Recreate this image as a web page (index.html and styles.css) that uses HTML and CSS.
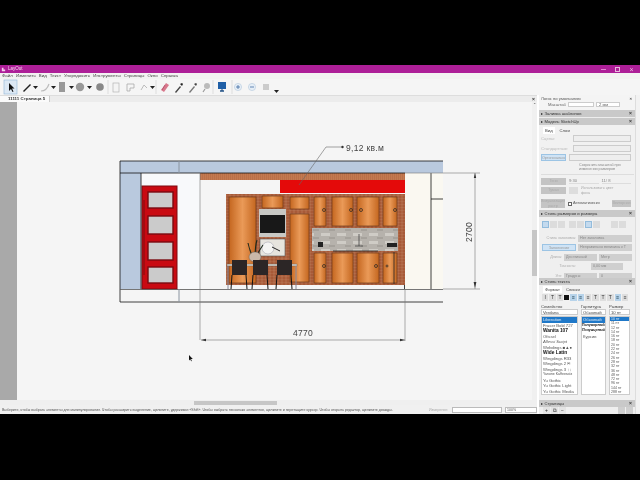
FILE: index.html
```html
<!DOCTYPE html>
<html lang="ru">
<head>
<meta charset="utf-8">
<title>LayOut</title>
<link rel="stylesheet" href="styles.css">
</head>
<body>
<div class="letterbox-top"></div>
<div class="app">
  <header class="titlebar">
    <svg class="logo" viewBox="0 0 6 6"><path d="M1 5V1h2v2h2v2z" fill="#f6d0ee"/></svg>
    <span class="title">LayOut</span>
    <span class="winbtns"><i class="wb wb-min"></i><i class="wb wb-max"></i><i class="wb wb-x">×</i></span>
  </header>
  <nav class="menubar">
    <span>Файл</span><span>Изменить</span><span>Вид</span><span>Текст</span><span>Упорядочить</span><span>Инструменты</span><span>Страницы</span><span>Окно</span><span>Справка</span>
  </nav>
  <div class="toolbar">
    <svg class="tools" viewBox="0 0 290 16" width="290" height="16">
      <rect x="4" y="1" width="13" height="14" fill="#dce8f4" stroke="#8fb4d8" stroke-width=".6"/>
      <path d="M9 4v8l2-2 1.500 3 1-.5-1.500-3h2.500z" fill="#111"/>
      <path d="M23 12l7-7 1 1-7 7z" fill="#222"/><path d="M33 7h5l-2.500 3z" fill="#222"/>
      <path d="M41 12c3 0 6-1 8-7" fill="none" stroke="#bbb" stroke-width="1.200"/><path d="M51 7h5l-2.500 3z" fill="#222"/>
      <rect x="59" y="3" width="6" height="10" fill="#999"/><path d="M69 7h5l-2.500 3z" fill="#222"/>
      <circle cx="80" cy="8" r="4.200" fill="#999"/><path d="M87 7h5l-2.500 3z" fill="#222"/>
      <circle cx="100" cy="8" r="3.800" fill="#888"/>
      <path d="M108 1v14M156 1v14M213 1v14M232 1v14" stroke="#ccc" stroke-width=".6"/>
      <rect x="113" y="4" width="6" height="9" fill="#f4f4f4" stroke="#aaa" stroke-width=".6"/>
      <path d="M127 12V5h7v4h-4v3z" fill="none" stroke="#aaa" stroke-width=".8"/>
      <path d="M141 11l3-5 3 3" fill="none" stroke="#bbb" stroke-width="1"/><path d="M150 7h5l-2.500 3z" fill="#222"/>
      <path d="M161 11l5-7 3 2-5 7z" fill="#d8788c"/><path d="M162 11l3-5" stroke="#a04060" stroke-width=".6"/>
      <path d="M175 13l5-6 1 1-5 6z" fill="#444"/><path d="M180 5l2-1 1 1-1 2z" fill="#222"/>
      <path d="M189 13l5-6 1 1-5 6z" fill="#777"/><path d="M194 5l2-1 1 1-1 2z" fill="#444"/>
      <circle cx="207" cy="7" r="3" fill="#bbb"/><path d="M205 10l-2 3" stroke="#999" stroke-width="1.200"/>
      <rect x="218" y="3" width="8" height="7" fill="#1f5fa6"/><path d="M220 12h4" stroke="#14477f" stroke-width="1.400"/><path d="M222 10v2" stroke="#14477f"/>
      <circle cx="238" cy="8" r="3.600" fill="#e6eef6" stroke="#a8c0d8" stroke-width=".5"/><path d="M236 8h4M238 6v4" stroke="#2a5a9a" stroke-width=".7"/>
      <circle cx="252" cy="8" r="3.600" fill="#e6eef6" stroke="#a8c0d8" stroke-width=".5"/><path d="M250 8h4" stroke="#2a5a9a" stroke-width=".7"/>
      <rect x="263" y="5" width="6" height="6" fill="#ccc"/>
      <path d="M274 11h5l-2.500 3z" fill="#222"/>
    </svg>
  </div>
  <div class="workspace">
    <div class="docarea">
      <div class="tabrow"><span class="tab">11111 Страница 5</span><b class="tabx">×</b></div>
      <div class="docrow">
        <div class="gutter"></div>
        <div class="canvas">
          <svg class="drawing" viewBox="17 102 515 298" width="515" height="298">
            <defs>
              <linearGradient id="wood" x1="0" x2="1" y1="0" y2="0">
                <stop offset="0" stop-color="#c4661f"/><stop offset=".5" stop-color="#ea9a58"/><stop offset="1" stop-color="#c4661f"/>
              </linearGradient>
              <pattern id="brick" width="4" height="3" patternUnits="userSpaceOnUse">
                <rect width="4" height="3" fill="#a85a38"/><path d="M0 0h4M2 0v3" stroke="#c89070" stroke-width=".4"/>
              </pattern>
              <pattern id="strip" width="2" height="7" patternUnits="userSpaceOnUse">
                <rect width="2" height="7" fill="#c47a50"/><path d="M0 0v7" stroke="#a0583a" stroke-width=".6"/>
              </pattern>
              <pattern id="tile" width="16" height="8" patternUnits="userSpaceOnUse">
                <rect width="16" height="8" fill="#b6b2ac"/><rect x="1" y="1" width="9" height="3" fill="#cfccc6"/><rect x="9" y="5" width="6" height="2" fill="#a6a29c"/>
              </pattern>
            </defs>
            <rect x="120" y="161" width="323" height="12" fill="#b9c9de"/>
            <rect x="120" y="173" width="21" height="116" fill="#b9c9de"/>
            <rect x="142" y="173" width="58" height="116" fill="#f8f9fb"/>
            <rect x="405" y="173" width="38" height="116" fill="#faf8f1"/>
            <rect x="200" y="173" width="205" height="7" fill="url(#strip)"/>
            <rect x="280" y="180" width="125" height="13" fill="#e40a0a"/>
            <rect x="226" y="194" width="179" height="91" fill="url(#brick)"/>

            <g fill="url(#wood)" stroke="#6e3a1c" stroke-width=".7">
              <rect x="229" y="197" width="27" height="86"/>
              <rect x="262" y="196" width="21" height="12"/>
              <rect x="290" y="197" width="19" height="12"/>
              <rect x="290" y="214" width="19" height="68"/>
              <rect x="314" y="197" width="12" height="29"/>
              <rect x="332" y="197" width="21" height="29"/>
              <rect x="357" y="197" width="22" height="29"/>
              <rect x="383" y="197" width="14" height="29"/>
              <rect x="314" y="253" width="12" height="30"/>
              <rect x="332" y="253" width="21" height="30"/>
              <rect x="357" y="253" width="22" height="30"/>
              <rect x="383" y="253" width="14" height="30"/>
            </g>
            <rect x="312" y="228" width="86" height="23" fill="url(#tile)"/>
            <path d="M333 251h45" stroke="#222" stroke-width=".8"/>
            <path d="M359 234v12M355 246h8" stroke="#444" stroke-width=".8" fill="none"/>
            <rect x="318" y="242" width="5" height="5" fill="#222"/>
            <rect x="387" y="243" width="10" height="4" fill="#222"/>
            <g fill="none" stroke="#222" stroke-width=".7">
              <circle cx="324" cy="210" r="1.500"/><circle cx="351" cy="210" r="1.500"/><circle cx="361" cy="210" r="1.500"/><circle cx="395" cy="210" r="1.500"/>
              <circle cx="324" cy="266" r="1.500"/><circle cx="376" cy="266" r="1.500"/><circle cx="387" cy="266" r="1"/>
            </g>
            <path d="M394 252v32" stroke="#222" stroke-width=".8"/>

            <rect x="259" y="209" width="27" height="28" fill="#c8c8c4"/>
            <rect x="260" y="215" width="25" height="18" fill="#181818"/>
            <rect x="260" y="239" width="25" height="17" fill="#e6e4de" stroke="#555" stroke-width=".6"/>
            <circle cx="268" cy="248" r="6" fill="#f4f4f2" stroke="#889" stroke-width=".4"/>
            <path d="M272 247l8 4" stroke="#222" stroke-width="1"/>
            <path d="M255 260c-3-4-6-12-7-17M255 260c0-6 0-14 2-20M255 260c2-6 5-11 8-15M255 260c-3-3-4-6-5-10" stroke="#1f2a1c" stroke-width="1.100" fill="none"/>
            <ellipse cx="255" cy="257" rx="6" ry="5" fill="#c9b8a8" stroke="#555" stroke-width=".4"/>
            <rect x="227" y="264" width="70" height="2" fill="#cfcac2" stroke="#555" stroke-width=".3"/>
            <path d="M228 266v23M296 266v23" stroke="#889" stroke-width="1"/>
            <g fill="#2c2626">
              <rect x="232" y="260" width="15" height="15"/>
              <rect x="253" y="260" width="15" height="15"/>
              <rect x="277" y="260" width="15" height="15"/>
            </g>
            <path d="M232 275l-1 14M246 275l1 14M253 275l-1 14M267 275l1 14M277 275l-1 14M291 275l1 14" stroke="#111" stroke-width="1"/>

            <rect x="142" y="186" width="35" height="103" fill="#c90a12" stroke="#7c0a10" stroke-width="1"/>
            <g fill="#cbcbcb" stroke="#7a0a10" stroke-width="1.400">
              <rect x="148" y="192" width="25" height="16"/>
              <rect x="148" y="216" width="25" height="18"/>
              <rect x="148" y="242" width="25" height="18"/>
              <rect x="148" y="267" width="25" height="16"/>
            </g>
            <path d="M144 200v75" stroke="#6e0a10" stroke-width=".8"/>

            <path d="M120 161h323M120 173h285M120 161v141h323M141 173v116M431 173v116M431 199h12M404.500 285v4" fill="none" stroke="#111" stroke-width=".8"/>
            <path d="M120 289.500h323" stroke="#555" stroke-width=".8"/>
            <path d="M179 161v12M179 289v13" stroke="#8a94a0" stroke-width="1"/>
            <path d="M200 173v167M405 289v52M405 173h75M443 289h37M475 173v116M201 340h204" fill="none" stroke="#777" stroke-width=".6"/>
            <path d="M475 173l-1.200 5h2.400zM475 288l-1.400-6h2.800zM201 340l5-1.200v2.400zM405 340l-5-1.200v2.400z" fill="#333"/>
            <path d="M299 185l27-38h16" fill="none" stroke="#666" stroke-width=".6"/>
            <circle cx="342.500" cy="147" r="1.200" fill="#333"/>
            <text class="dim" x="346" y="150.500">9,12 кв.м</text>
            <text class="dim" x="293" y="336">4770</text>
            <text class="dim" transform="translate(472 242) rotate(-90)">2700</text>
            <path d="M189 355v5.500l1.300-1.200.8 1.900.7-.3-.8-1.900h1.800z" fill="#111"/>
          </svg>
        </div>
        <div class="vscroll"><b class="arrow">⌃</b><div class="vthumb"></div></div>
      </div>
      <div class="hscroll"><div class="hthumb"></div></div>
      <footer class="status">
        <span class="hint">Выберите, чтобы выбрать элементы для манипулирования. Чтобы расширить выделение, щелкните, удерживая «Shift». Чтобы выбрать несколько элементов, щелкните и перетащите курсор. Чтобы открыть редактор, щелкните дважды.</span>
        <span class="sl">Измерения</span><i class="sbox"></i><i class="sbox zoom">100%</i>
      </footer>
    </div>
    <aside class="panel">
      <div class="pcontent">
      <div class="p-top">
        <div class="p-title"><span>Логос по умолчанию</span><b>×</b></div>
        <div class="p-scale"><span>Масштаб</span><i class="field f28"></i><i class="field f22">2 мм</i></div>
      </div>
      <div class="acc"><span>Заливка шаблонов</span><b>×</b></div>
      <div class="acc"><span>Модель SketchUp</span><b>×</b></div>
      <section class="model">
        <div class="tabs"><span class="on">Вид</span><span>Слои</span></div>
        <div class="mrow"><span class="lbl">Сцены:</span><i class="field fgrow"></i></div>
        <div class="mrow"><span class="lbl">Стандартные:</span><i class="field fgrow"></i></div>
        <div class="mrow"><span class="blue-btn">Ортогонально</span><i class="field fgrow"></i></div>
        <div class="note">Сохранить масштаб при<br>изменении размеров</div>
        <div class="divider"></div>
        <div class="mrow"><span class="gray-btn">Тени</span><span class="num">9:30</span><span class="num">11/ 8</span></div>
        <div class="mrow"><span class="gray-btn">Туман</span><span class="sw"></span><span class="note2">Использовать цвет<br>фона</span></div>
        <div class="mrow mrow-last"><span class="gray-btn small">Визуализация<br>растр</span><span class="check"></span><span class="auto">Автоматически</span><span class="gray-btn end">Векторная</span></div>
      </section>
      <div class="acc"><span>Стиль размеров и размера</span><b>×</b></div>
      <section class="dims">
        <div class="icons">
          <i class="ic sel"></i><i class="ic"></i><i class="ic"></i><i class="ic gap"></i><i class="ic"></i><i class="ic sel"></i><i class="ic"></i><i class="ic gap2"></i><i class="ic"></i>
        </div>
        <div class="drow"><span class="dl">Стиль заголовка:</span><span class="dv">Нет заголовка</span></div>
        <div class="drow"><span class="blue-btn wide">Заполнение</span><span class="dv">Неправильно величина к Т</span></div>
        <div class="drow"><span class="dl short">Длина:</span><span class="dv half">Десятичный</span><span class="dv half">Метр</span></div>
        <div class="drow"><span class="dl">Точность:</span><span class="dv small">0,00 мм</span></div>
        <div class="drow"><span class="dl short">Угл:</span><span class="dv half">Градусы</span><span class="dv half">0</span></div>
      </section>
      <div class="acc"><span>Стиль текста</span><b>×</b></div>
      <section class="textstyle">
        <div class="tabs tight"><span class="on">Формат</span><span>Списки</span></div>
        <div class="ticons">
          <i class="t">I</i><i class="t">T</i><i class="t">T</i><i class="t black"></i><i class="t sel">≡</i><i class="t sel">≡</i><i class="t">≡</i><i class="t">T</i><i class="t">T</i><i class="t">T</i><i class="t sel">≡</i><i class="t">≡</i>
        </div>
        <div class="fontgrid">
          <div class="fcol">
            <span class="fh">Семейство</span><span class="fi">Verdana</span>
            <ul class="flist">
              <li class="cur">Liberation</li><li>Fraser Bold 727</li><li class="heavy">Wanita 107</li><li>Ofissel</li><li class="it">Allessi Script</li><li>Webdings ■▲●</li><li class="heavy">Wide Latin</li><li>Wingdings R33</li><li>Wingdings 2 ✉</li><li>Wingdings 3 ↑↓</li><li class="sm">Yanone Kaffeesatz</li><li>Yu Gothic</li><li>Yu Gothic Light</li><li>Yu Gothic Media</li>
            </ul>
          </div>
          <div class="fcol">
            <span class="fh">Гарнитура</span><span class="fi">Обычный</span>
            <ul class="flist">
              <li class="cur">Обычный</li><li class="heavy narrow">Полужирный</li><li class="heavy narrow it">Полужирный</li><li>Курсив</li>
            </ul>
          </div>
          <div class="fcol">
            <span class="fh">Размер</span><span class="fi">10 пт</span>
            <ul class="flist sizes">
              <li class="cur">10 пт</li><li>11 пт</li><li>12 пт</li><li>14 пт</li><li>16 пт</li><li>18 пт</li><li>20 пт</li><li>22 пт</li><li>24 пт</li><li>26 пт</li><li>28 пт</li><li>32 пт</li><li>36 пт</li><li>48 пт</li><li>72 пт</li><li>96 пт</li><li>144 пт</li><li>288 пт</li>
            </ul>
          </div>
        </div>
      </section>
      <div class="acc"><span>Страницы</span><b>×</b></div>
      <div class="pagesbar"><i class="pb">+</i><i class="pb">⧉</i><i class="pb">−</i><em></em><i class="pb gray"></i><i class="pb gray"></i></div>
      </div>
      <div class="pscroll"></div>
    </aside>
  </div>
</div>
</body>
</html>
```

FILE: styles.css
```css
* { box-sizing: border-box; }
html, body { margin: 0; padding: 0; background: #000; }
body { width: 640px; height: 480px; overflow: hidden; font-family: "Liberation Sans", Arial, sans-serif; color: #333; }
i, em { font-style: normal; }
ul { list-style: none; margin: 0; padding: 0; }
.letterbox-top { height: 65px; background: #000; }
.app { height: 349px; display: flex; flex-direction: column; background: #f0f0f0; overflow: hidden; filter: blur(.35px); }

.titlebar { height: 8px; flex: none; display: flex; align-items: center; padding-left: 1px; background: #ad1f98; color: #f6d8f0; font-size: 4.500px; }
.logo { width: 5px; height: 5px; margin-right: 2px; }
.title { line-height: 8px; }
.winbtns { margin-left: auto; display: flex; align-items: center; gap: 9px; padding-right: 6px; }
.wb { display: block; width: 5px; height: 5px; line-height: 5px; text-align: center; font-size: 7px; color: #e9b7de; }
.wb-min { height: 1px; background: #e088d0; }
.wb-max { border: 1px solid #e9b7de; }

.menubar { height: 6px; flex: none; display: flex; gap: 3.100px; padding-left: 2px; background: #f2f2f2; font-size: 4.400px; line-height: 6px; color: #444; white-space: nowrap; }

.toolbar { height: 16px; flex: none; background: #f5f5f5; }
.tools { display: block; }

.workspace { flex: 1; display: flex; min-height: 0; }
.docarea { flex: none; width: 539px; display: flex; flex-direction: column; border-right: 2px solid #fff; }
.tabrow { height: 7px; flex: none; display: flex; justify-content: space-between; background: #ececec; border-top: 1px solid #ddd; font-size: 4.400px; line-height: 6px; }
.tab { display: block; width: 50px; height: 6px; padding-left: 8px; background: #fafafa; border-right: 1px solid #ccc; color: #333; font-weight: bold; white-space: nowrap; }
.tabx { padding-right: 2px; font-size: 5px; }
.docrow { flex: 1; display: flex; min-height: 0; }
.gutter { width: 17px; flex: none; background: #a9a9a9; }
.canvas { width: 515px; flex: none; position: relative; background: #f5f5f5; overflow: hidden; }
.drawing { display: block; position: absolute; left: 0; top: 0; }
.dim { font-family: "Liberation Sans", Arial, sans-serif; font-size: 8.500px; fill: #444; letter-spacing: .3px; }
.vscroll { width: 5px; flex: none; background: #f0f0f0; }
.arrow { display: block; height: 128px; font-size: 4px; line-height: 5px; text-align: center; font-weight: normal; }
.vthumb { height: 46px; background: #c6c6c6; }
.hscroll { height: 5px; flex: none; padding: .5px 0 .5px 194px; background: #efefef; }
.hthumb { width: 83px; height: 4px; background: #c6c6c6; }
.status { height: 9px; flex: none; display: flex; align-items: center; padding: 0 2px; background: #f0f0f0; font-size: 3.550px; color: #555; white-space: nowrap; }
.hint { width: 427px; flex: none; overflow: hidden; }
.sl { width: 21px; flex: none; color: #aaa; }
.sbox { display: block; width: 50px; height: 6px; margin-left: 2px; background: #fff; border: .5px solid #bbb; flex: none; }
.sbox.zoom { width: 32px; margin-left: 3px; padding-left: 1px; line-height: 5px; }

.panel { flex: 1; min-width: 0; display: flex; background: #ededed; font-size: 4.200px; line-height: 5px; color: #666; white-space: nowrap; }
.pcontent { flex: 1; min-width: 0; display: flex; flex-direction: column; }
.pscroll { width: 5px; flex: none; background: #f2f2f2; border-left: .5px solid #ddd; }
.p-top { height: 15px; flex: none; background: #f4f4f4; }
.p-title { display: flex; justify-content: space-between; padding: 1px 3px 0 2px; height: 6px; color: #555; }
.p-title b { color: #333; }
.p-scale { display: flex; align-items: center; gap: 2px; height: 6px; padding-left: 9px; }
.field { display: block; height: 5px; background: #fff; border: .5px solid #ccc; padding-left: 2px; line-height: 4px; }
.f28 { width: 26px; }
.f22 { width: 24px; }
.fgrow { flex: 1; height: 7px; background: #eee; }

.acc { height: 7px; flex: none; display: flex; align-items: center; gap: 1.500px; padding: 0 3px 0 2px; margin-bottom: 1px; background: #c9c9c9; color: #333; }
.acc::before { content: ""; border-left: 2.500px solid #222; border-top: 1.500px solid transparent; border-bottom: 1.500px solid transparent; }
.acc b { margin-left: auto; font-size: 5px; }

.model { height: 85px; flex: none; margin-top: -1px; padding: 2px 1px 0 2px; background: #f1f1f1; }
.tabs { display: flex; gap: 5px; height: 7px; padding-left: 2px; line-height: 7px; color: #444; }
.tabs .on { padding: 0 2px; background: #fff; }
.mrow { display: flex; align-items: center; gap: 3px; height: 9px; padding-right: 3px; margin-bottom: .5px; }
.lbl { width: 29px; color: #bbb; }
.blue-btn { display: block; width: 25px; height: 7px; line-height: 7px; text-align: center; background: #cfe3f5; border: .5px solid #9cc4e4; color: #999; overflow: hidden; font-size: 3.700px; }
.wide { width: 34px; }
.note { padding-left: 38px; height: 9px; line-height: 4.500px; color: #888; font-size: 3.700px; }
.divider { height: 1px; background: #ddd; margin: 2px 0; }
.gray-btn { display: block; flex: none; width: 25px; height: 7px; line-height: 7px; text-align: center; background: #c4c4c4; color: #aaa; font-size: 3.700px; overflow: hidden; }
.gray-btn.small { width: 24px; height: 9px; line-height: 4.500px; }
.gray-btn.end { width: 19px; margin-left: auto; }
.num { flex: 1; color: #888; border-bottom: .5px solid #ddd; }
.sw { width: 9px; height: 7px; background: #ddd; flex: none; }
.note2 { line-height: 4.500px; color: #aaa; font-size: 3.700px; }
.check { width: 4px; height: 4px; border: .5px solid #666; background: #fff; flex: none; }
.auto { color: #555; margin-left: -2px; font-size: 3.800px; }
.mrow-last { margin-top: 4px; }

.dims { height: 61px; flex: none; margin-top: -1px; padding: 4px 3px 0 3px; background: #efefef; }
.icons { display: flex; gap: 1px; height: 8px; margin-bottom: 5px; }
.ic { display: block; width: 7px; height: 7px; background: #dcdcdc; }
.ic.sel { background: #c4daee; border: .5px solid #93bcdc; }
.ic.gap { margin-left: 3px; }
.ic.gap2 { margin-left: 10px; }
.drow { display: flex; align-items: center; gap: 2px; height: 8px; margin-bottom: 1.500px; }
.dl { width: 34px; text-align: right; color: #aaa; font-size: 3.700px; overflow: hidden; }
.dl.short { width: 20px; }
.dv { flex: 1; min-width: 0; overflow: hidden; height: 7px; line-height: 7px; padding-left: 2px; background: #cfcfcf; color: #888; font-size: 3.700px; }
.dv.small { flex: none; width: 32px; margin-left: 13px; }

.textstyle { height: 115px; flex: none; margin-top: -1px; padding: 1px 1px 0 2px; background: #f1f1f1; }
.tabs.tight { height: 7px; gap: 4px; }
.ticons { display: flex; gap: 1px; height: 8px; margin: 1px 0 2px; padding-left: 1px; }
.t { display: block; width: 6.400px; height: 7px; line-height: 7px; text-align: center; background: #dedede; color: #333; font-size: 5px; }
.t.black { background: #111; width: 5px; height: 5px; margin-top: 1px; }
.t.sel { background: #b7d3ea; color: #245; }
.fontgrid { display: grid; grid-template-columns: 37px 25px 21px; column-gap: 3px; margin-top: 1px; }
.fcol { display: flex; flex-direction: column; min-width: 0; }
.fh { height: 5px; line-height: 5px; color: #444; }
.fi { height: 6px; line-height: 5px; padding-left: 1px; background: #fff; border: .5px solid #ccc; color: #444; }
.flist { height: 79px; background: #fff; border: .5px solid #ccc; overflow: hidden; line-height: 5.500px; color: #555; margin-top: 1px; }
.flist li { height: 5.500px; padding-left: 1px; overflow: hidden; }
.flist .cur { background: #1f78c8; color: #dbe9f6; }
.flist .heavy { font-weight: bold; color: #111; font-size: 4.800px; }
.flist .narrow { font-size: 3.500px; padding-left: 0; }
.flist .it { font-style: italic; }
.flist .sm { font-size: 3.500px; }
.sizes { line-height: 4.300px; font-size: 3.500px; }
.sizes li { height: 4.300px; }

.pagesbar { flex: 1; display: flex; align-items: center; gap: 1px; padding: 0 2px 0 4px; margin-top: -1px; background: #efefef; }
.pb { display: block; width: 7px; height: 7px; line-height: 7px; text-align: center; background: #e4e4e4; color: #222; font-size: 5px; }
.pb.gray { background: #cfcfcf; }
.pagesbar em { flex: 1; }
```
